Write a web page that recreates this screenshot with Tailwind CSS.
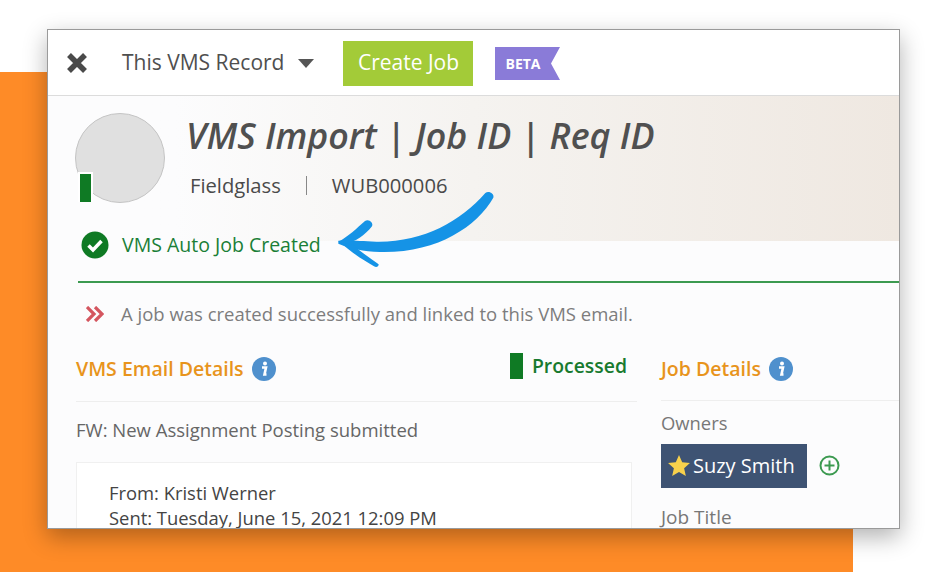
<!DOCTYPE html>
<html lang="en">
  <head>
    <meta charset="UTF-8" />
    <title>VMS Record</title>
    <script src="https://cdn.jsdelivr.net/npm/@tailwindcss/browser@4"></script>
  </head>
  <body class="bg-white overflow-hidden font-['Open_Sans',sans-serif]">
    <div class="relative w-[941px] h-[579px] overflow-hidden">
      <!-- orange backdrop -->
      <div class="absolute left-0 top-[72px] w-[853px] h-[500px] bg-[#fe8b27]"></div>

      <!-- record window -->
      <div class="absolute left-[47px] top-[29px] w-[853px] h-[500px] bg-[#fcfcfd] border border-[#9a9a9a] overflow-hidden shadow-[0_8px_22px_rgba(0,0,0,0.3)]">
        <!-- toolbar -->
        <div class="flex items-center h-[66px] bg-white border-b border-[#dcdcdc] pl-[18px]">
          <svg class="w-[22px] h-[22px]" viewBox="0 0 22 22"><path d="M3 3 19 19M19 3 3 19" stroke="#4a4a4a" stroke-width="5.500" /></svg>
          <span class="ml-[34px] text-[21px] font-medium text-[#4f4f4f] whitespace-nowrap">This VMS Record</span>
          <svg class="ml-[14px] mt-[2px] w-[16px] h-[9px]" viewBox="0 0 16 9"><path d="M0 0H16L8 9Z" fill="#555" /></svg>
          <button class="ml-[29px] mt-[2px] pb-[2px] w-[130px] h-[45px] bg-[#a3cb38] text-white text-[21px] font-medium">Create Job</button>
          <div class="relative ml-[22px] mt-[1px] w-[65px] h-[33px]">
            <svg class="absolute inset-0" width="65" height="33" viewBox="0 0 65 33"><path d="M0 0H65L56 16.500L65 33H0Z" fill="#8a7bd8" /></svg>
            <span class="relative block pl-[10px] leading-[33px] text-[14px] font-bold text-white">BETA</span>
          </div>
        </div>

        <!-- record header -->
        <div class="relative h-[145px] bg-linear-to-r from-[#fcfcfd] from-15% via-[#f5f3f0] via-50% to-[#efe8e1] pl-[27px] pt-[17px] flex">
          <div class="relative shrink-0 w-[90px] h-[90px] rounded-full bg-[#e0e0e0] border border-[#c4c4c4]">
            <div class="absolute left-[2px] bottom-0 w-[15px] h-[30px] bg-[#0f7a24] border-2 border-white border-b-0"></div>
          </div>
          <div class="ml-[21px]">
            <h1 class="-mt-[2px] text-[35.800px] leading-[48px] italic font-semibold text-[#505050] whitespace-nowrap">VMS Import | Job ID | Req ID</h1>
            <div class="flex items-center mt-[11px] ml-[4px] text-[20.200px] font-medium text-[#4a4a4a]">
              <span>Fieldglass</span>
              <span class="mx-[25px] w-px h-[19px] bg-[#888]"></span>
              <span>WUB000006</span>
            </div>
          </div>
        </div>

        <!-- status -->
        <div class="-mt-[11px] relative flex items-center h-[30px] pl-[33px]">
          <svg class="w-[28px] h-[28px]" viewBox="0 0 28 28">
            <circle cx="14" cy="14" r="13.500" fill="#0f7a24" />
            <path d="M7.500 14.500 12 19 20.500 10" fill="none" stroke="#fff" stroke-width="3.500" />
          </svg>
          <span class="ml-[13px] text-[19.500px] text-[#1a7f37] whitespace-nowrap">VMS Auto Job Created</span>
        </div>
        <div class="ml-[30px] mt-[21px] h-[2px] bg-[#3c9a50]"></div>

        <!-- message -->
        <div class="flex items-center h-[62px] pl-[38px]">
          <svg class="w-[18px] h-[16px]" viewBox="0 0 18 16"><path d="M1 1 8 8 1 15M9 1 16 8 9 15" fill="none" stroke="#d4565f" stroke-width="3.200" /></svg>
          <span class="ml-[17px] text-[18.500px] text-[#7d7d7d] whitespace-nowrap">A job was created successfully and linked to this VMS email.</span>
        </div>

        <!-- two columns -->
        <div class="flex pl-[28px]">
          <div class="w-[561px] shrink-0">
            <div class="flex items-center h-[57px] pb-[8px] border-b border-[#eeeeee]">
              <span class="text-[19.500px] font-semibold text-[#e8941c] whitespace-nowrap">VMS Email Details</span>
              <svg class="ml-[8px] w-[24px] h-[24px]" viewBox="0 0 24 24"><circle cx="12" cy="12" r="12" fill="#4f90cd" /><circle cx="13" cy="6.500" r="2" fill="#fff" /><path d="M10 10.500H14L12.500 17.500H14.500" fill="none" stroke="#fff" stroke-width="2.600" /></svg>
              <span class="ml-auto mr-[10px] -mt-[6px] flex items-center text-[19.400px] font-semibold text-[#187a2f] whitespace-nowrap">
                <span class="w-[13px] h-[26px] bg-[#0f7a24] mr-[9px]"></span>Processed
              </span>
            </div>
            <p class="mt-[14px] text-[18.500px] text-[#666] whitespace-nowrap">FW: New Assignment Posting submitted</p>
            <div class="mt-[18px] h-[200px] w-[556px] bg-white border border-[#f0f0f0] pl-[32px] pt-[17px] text-[18.400px] leading-[25px] text-[#444] whitespace-nowrap">
              <p>From: Kristi Werner</p>
              <p>Sent: Tuesday, June 15, 2021 12:09 PM</p>
            </div>
          </div>
          <div class="ml-[24px] flex-1">
            <div class="flex items-center h-[56px] pb-[8px] border-b border-[#eeeeee]">
              <span class="text-[19.500px] font-semibold text-[#e8941c] whitespace-nowrap">Job Details</span>
              <svg class="ml-[8px] w-[24px] h-[24px]" viewBox="0 0 24 24"><circle cx="12" cy="12" r="12" fill="#4f90cd" /><circle cx="13" cy="6.500" r="2" fill="#fff" /><path d="M10 10.500H14L12.500 17.500H14.500" fill="none" stroke="#fff" stroke-width="2.600" /></svg>
            </div>
            <p class="mt-[8px] text-[18.400px] font-medium text-[#777]">Owners</p>
            <div class="flex items-center mt-[7px]">
              <div class="flex items-center w-[146px] h-[44px] bg-[#3e5373] pl-[7px] text-[20px] font-medium text-white whitespace-nowrap">
                <svg class="w-[22px] h-[21px]" viewBox="0 0 24 23"><path d="M12 0 15.500 8 24 8.800 17.600 14.500 19.500 23 12 18.500 4.500 23 6.400 14.500 0 8.800 8.500 8Z" fill="#f7d14c" /></svg>
                <span class="ml-[3px]">Suzy Smith</span>
              </div>
              <svg class="ml-[12px] w-[21px] h-[21px]" viewBox="0 0 21 21"><circle cx="10.500" cy="10.500" r="9" fill="none" stroke="#3c9a50" stroke-width="2" /><path d="M10.500 5.500V15.500M5.500 10.500H15.500" stroke="#3c9a50" stroke-width="2" /></svg>
            </div>
            <p class="mt-[15px] text-[19px] font-medium text-[#777] whitespace-nowrap">Job Title</p>
          </div>
        </div>

        <!-- arrow pointing at the status -->
        <svg class="absolute left-[282px] top-[155px]" width="175" height="90" viewBox="0 0 525 270">
          <path d="M466 24C476 16 494 26 490 38C440 125 320 205 150 201C100 200 60 190 25 176L25 167C60 165 90 168 140 170C280 172 390 110 466 24Z" fill="#1593e6" />
          <path d="M105 108C115 100 132 112 126 124C105 150 80 170 40 178L25 170C55 155 80 130 105 108Z" fill="#1593e6" />
          <path d="M30 172 70 180C90 200 125 222 146 238C146 246 138 248 132 244C100 225 60 200 30 172Z" fill="#1593e6" />
        </svg>
      </div>
    </div>
  </body>
</html>
